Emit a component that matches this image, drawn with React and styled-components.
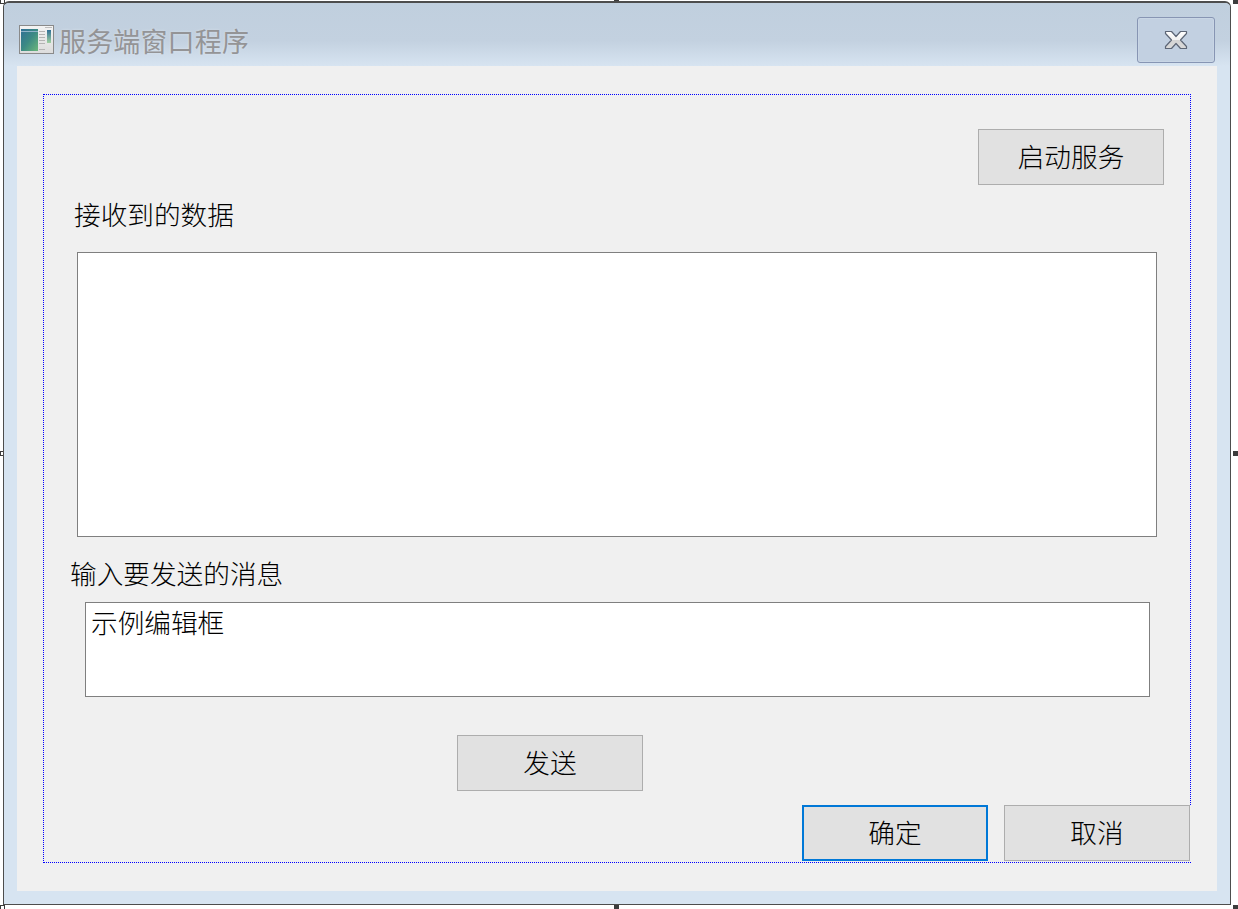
import React from 'react'
import styled, { createGlobalStyle } from 'styled-components'

const GlobalStyle = createGlobalStyle`
  html, body {
    margin: 0;
    padding: 0;
    background: #fff;
  }
  body {
    font-family: "Noto Sans CJK SC", "Liberation Serif", serif;
  }
`

function AppIcon() {
  return (
    <svg width="35" height="29" viewBox="0 0 35 29">
      <defs>
        <linearGradient id="pane" x1="0" y1="0" x2="1" y2="1">
          <stop offset="0" stopColor="#2f6f96" />
          <stop offset="0.5" stopColor="#3c8a84" />
          <stop offset="1" stopColor="#6cb77a" />
        </linearGradient>
        <linearGradient id="strip" x1="0" y1="0" x2="0" y2="1">
          <stop offset="0" stopColor="#2f6f96" />
          <stop offset="1" stopColor="#9fd0a0" />
        </linearGradient>
        <linearGradient id="frame" x1="0" y1="0" x2="0" y2="1">
          <stop offset="0" stopColor="#f4f4f4" />
          <stop offset="1" stopColor="#dcdcdc" />
        </linearGradient>
      </defs>
      <rect x="0.5" y="0.5" width="34" height="28" fill="url(#frame)" stroke="#8a8a8a" />
      <rect x="2" y="4" width="17" height="22" fill="url(#pane)" />
      <rect x="2" y="6" width="17" height="1" fill="#8fb4c9" />
      <rect x="28" y="5" width="4" height="13" fill="url(#strip)" />
      <g fill="#b4b4b4">
        <rect x="20" y="6" width="6" height="1" />
        <rect x="20" y="9" width="6" height="1" />
        <rect x="20" y="12" width="6" height="1" />
        <rect x="20" y="15" width="6" height="1" />
        <rect x="20" y="18" width="6" height="1" />
        <rect x="20" y="24" width="6" height="1" />
      </g>
      <rect x="26" y="2" width="7" height="1" fill="#bdbdbd" />
    </svg>
  )
}

function CloseGlyph() {
  return (
    <svg width="24" height="20" viewBox="0 0 24 20">
      <defs>
        <linearGradient id="cross" x1="0" y1="0" x2="0" y2="1">
          <stop offset="0" stopColor="#ffffff" />
          <stop offset="0.5" stopColor="#f1f1f1" />
          <stop offset="0.52" stopColor="#d4d4d4" />
          <stop offset="1" stopColor="#d9d9d9" />
        </linearGradient>
      </defs>
      <path
        d="M1.5 1.5H7.5L12 6.5L16.5 1.5H22.5V3.5L16.5 10L22.5 16.5V18.5H16.5L12 13.5L7.5 18.5H1.5V16.5L7.5 10L1.5 3.5Z"
        fill="url(#cross)"
        stroke="#5d6676"
        strokeWidth="1.2"
        strokeLinejoin="round"
      />
    </svg>
  )
}

export default function App() {
  return (
    <>
      <GlobalStyle />
      <Stage>
        <Handle $at="top: -1px; left: 0;" $hollow />
        <Handle $at="top: -1px; left: 614px;" />
        <Handle $at="top: -1px; right: 0;" />
        <Handle $at="top: 451px; left: 0;" $hollow />
        <Handle $at="top: 451px; right: 0;" />
        <Handle $at="top: 905px; left: 0;" $hollow />
        <Handle $at="top: 905px; left: 614px;" />
        <Handle $at="top: 905px; right: 0;" />

        <Window>
          <TitleBar>
            <TitleIcon>
              <AppIcon />
            </TitleIcon>
            <TitleText>服务端窗口程序</TitleText>
            <CloseButton>
              <CloseGlyph />
            </CloseButton>
          </TitleBar>

          <Client>
            <Guide>
              <StartRow>
                <PushButton>启动服务</PushButton>
              </StartRow>
              <FieldLabel $left={30} $top={15}>接收到的数据</FieldLabel>
              <ReceivedBox />
              <FieldLabel $left={26} $top={22}>输入要发送的消息</FieldLabel>
              <MessageBox>示例编辑框</MessageBox>
              <SendRow>
                <PushButton>发送</PushButton>
              </SendRow>
              <DialogActions>
                <PushButton $primary>确定</PushButton>
                <PushButton $masksGuide>取消</PushButton>
              </DialogActions>
            </Guide>
          </Client>
        </Window>
      </Stage>
    </>
  )
}

const Stage = styled.div`
  position: relative;
  width: 1238px;
  height: 909px;
  overflow: hidden;
  padding: 1px 0 0 3px;
  box-sizing: border-box;
`

const Handle = styled.span`
  position: absolute;
  ${p => p.$at}
  width: 5px;
  height: 5px;
  box-sizing: border-box;
  border: 1px solid #3c3c3c;
  background: ${p => (p.$hollow ? '#fff' : '#3c3c3c')};
`

const Window = styled.div`
  position: relative;
  width: 1228px;
  height: 904px;
  box-sizing: border-box;
  border: 1px solid #4d4d4d;
  border-top-width: 2px;
  border-radius: 6px 6px 0 0;
  background: #d7e4f1;
  display: flex;
  flex-direction: column;
  overflow: hidden;
`

const TitleBar = styled.div`
  flex: none;
  height: 63px;
  display: flex;
  align-items: flex-start;
  padding: 0 15px 0 15px;
  box-sizing: border-box;
  background: linear-gradient(to bottom, #c0cfde 0%, #c3d1e0 60%, #d7e4f1 100%);
`

const TitleIcon = styled.div`
  margin-top: 22px;
  height: 29px;
`

const TitleText = styled.div`
  margin: 16px 0 0 5px;
  font-size: 27px;
  line-height: 44px;
  letter-spacing: 0.15px;
  color: #949496;
  font-weight: 400;
  text-shadow: 0 0 3px rgba(255, 255, 255, 0.35);
`

const CloseButton = styled.div`
  margin: 14px 0 0 auto;
  width: 78px;
  height: 46px;
  box-sizing: border-box;
  border: 1px solid #8795b3;
  border-radius: 3px;
  background: #c2d0e1;
  box-shadow: inset 0 0 0 1px #c9d6e5;
  display: flex;
  align-items: center;
  justify-content: center;
`

const Client = styled.div`
  flex: none;
  width: 1200px;
  height: 825px;
  margin-left: 13px;
  padding: 28px 0 0 26px;
  box-sizing: border-box;
  background: #f0f0f0;
`

const Guide = styled.div`
  width: 1148px;
  height: 769px;
  box-sizing: border-box;
  border: 1px dotted #0000ff;
  display: flex;
  flex-direction: column;
`

const StartRow = styled.div`
  display: flex;
  justify-content: flex-end;
  margin: 34px 26px 0 0;
`

const PushButton = styled.div`
  width: 186px;
  height: 56px;
  box-sizing: border-box;
  padding-bottom: 4px;
  border: ${p => (p.$primary ? '2px solid #0078d7' : '1px solid #adadad')};
  background: #e1e1e1;
  color: #000;
  font-size: 26.67px;
  font-weight: 300;
  display: flex;
  align-items: center;
  justify-content: center;
  ${p => p.$masksGuide && 'box-shadow: 1px 0 0 #f0f0f0;'}
`

const FieldLabel = styled.div`
  margin: ${p => p.$top}px 0 0 ${p => p.$left}px;
  height: 28px;
  font-size: 26.67px;
  line-height: 28px;
  font-weight: 300;
  color: #000;
`

const Field = styled.div`
  box-sizing: border-box;
  background: #fff;
  border: 1px solid #7f7f7f;
`

const ReceivedBox = styled(Field)`
  margin: 24px 0 0 33px;
  width: 1080px;
  height: 285px;
`

const MessageBox = styled(Field)`
  margin: 15px 0 0 41px;
  width: 1065px;
  height: 95px;
  padding: 2px 0 0 5px;
  font-size: 26.67px;
  line-height: 33px;
  font-weight: 300;
  color: #000;
`

const SendRow = styled.div`
  margin: 38px 0 0 413px;
`

const DialogActions = styled.div`
  display: flex;
  justify-content: flex-end;
  gap: 16px;
  margin-top: 14px;
`
